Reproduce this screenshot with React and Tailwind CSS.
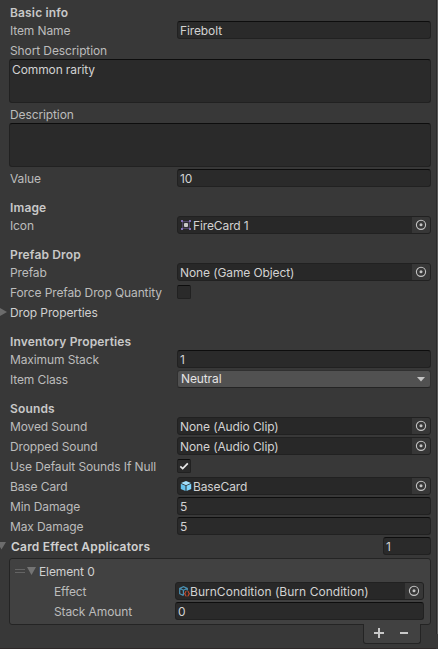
import React from 'react';

const FIELD =
  'h-[18px] rounded-[3px] border border-[#212121] text-[#d2d2d2] flex items-center min-w-0';

function Header({ children, first }) {
  return (
    <div className={`flex h-[18px] items-center pl-[10px] font-semibold tracking-[0.15px] text-[#c8c8c8] ${first ? '' : 'mt-[9px]'}`}>
      <span className="relative top-px">{children}</span>
    </div>
  );
}

function Row({ label, children, labelClass = 'w-[177px] pl-[10px]' }) {
  return (
    <div className="mb-[2px] flex h-[18px] items-center">
      <div className={`shrink-0 whitespace-nowrap text-[#bcbcbc] ${labelClass}`}>
        <span className="relative top-px">{label}</span>
      </div>
      {children}
    </div>
  );
}

function Input({ value, className = 'flex-1' }) {
  return (
    <div className={`${FIELD} border-t-[#0d0d0d] bg-[#2a2a2a] pl-[2px] ${className}`}>
      <span className="relative top-px">{value}</span>
    </div>
  );
}

function Picker() {
  return (
    <div className="flex h-full w-[18px] shrink-0 items-center justify-center rounded-r-[2px] bg-[#373737]">
      <svg width="12" height="12" viewBox="0 0 12 12" fill="none">
        <circle cx="6" cy="5.8" r="4.6" stroke="#c4c4c4" strokeWidth="1.1" />
        <circle cx="6" cy="5.8" r="1.5" fill="#c4c4c4" />
      </svg>
    </div>
  );
}

function ObjectField({ icon, value, textClass = '' }) {
  return (
    <div className={`${FIELD} flex-1 bg-[#282828] pl-[2px]`}>
      {icon}
      <span className={`relative top-px flex-1 whitespace-nowrap ${textClass}`}>{value}</span>
      <Picker />
    </div>
  );
}

function Checkbox({ checked }) {
  return (
    <div className="h-[14px] w-[14px] rounded-[2px] border border-[#212121] border-t-[#0d0d0d] bg-[#2a2a2a]">
      {checked && (
        <svg width="12" height="12" viewBox="0 0 12 12" fill="none">
          <path d="M2.3 6.3 4.7 8.6 9.8 3.3" stroke="#e8e8e8" strokeWidth="1.7" />
        </svg>
      )}
    </div>
  );
}

function SpriteIcon() {
  return (
    <svg className="mr-px shrink-0" width="12" height="16" viewBox="0 0 12 16">
      <path d="M2.5 4.5h7v7h-7z" fill="#302c38" stroke="#514766" />
      <path fill="#8571ba" d="M1 3h2v2H1zM9 3h2v2H9zM1 11h2v2H1zM9 11h2v2H9z" />
      <rect x="4" y="6" width="4" height="4" rx="1" fill="#c8c8c8" />
    </svg>
  );
}

function PrefabIcon() {
  return (
    <svg className="mr-px shrink-0" width="12" height="16" viewBox="0 0 12 16">
      <path d="M6 3 11 5 6 7.2 1 5z" fill="#a3dffb" />
      <path d="M.8 5.8 5.5 7.8V13L.8 11z" fill="#67c3ef" />
      <path d="M11.2 5.8 6.5 7.8V13l4.7-2z" fill="#7ed3fa" />
    </svg>
  );
}

function ScriptableIcon() {
  return (
    <svg className="shrink-0" width="12" height="16" viewBox="0 0 12 16" fill="none">
      <path d="M5.3 12.4 1.7 10.7V5.4L5.5 3.7 9.3 5.4V7.4M1.7 5.4 5.5 7.2 9.3 5.4M5.4 7.2v5.2" stroke="#4a91b3" strokeWidth="1.2" />
      <path d="M8.4 8.3C7.3 8.3 7.6 10 6.6 10.7c1 .6.7 2.4 1.8 2.4M9.6 8.3c1.1 0 .8 1.7 1.8 2.4-1 .6-.7 2.4-1.8 2.4" stroke="#c64c2e" strokeWidth="1.1" />
    </svg>
  );
}

function TextArea({ children }) {
  return (
    <div className="mb-[2px] ml-[9px] h-[44px] rounded-[3px] border border-[#212121] border-t-[#0d0d0d] bg-[#2a2a2a] pl-[2px] pt-px leading-[17px] text-[#d2d2d2]">
      {children}
    </div>
  );
}

function Label({ children }) {
  return (
    <div className="flex h-[18px] items-center pl-[10px] text-[#bcbcbc]">
      <span className="relative top-px">{children}</span>
    </div>
  );
}

export default function App() {
  return (
    <div className="relative h-[649px] w-[438px] overflow-hidden bg-[#383838] font-['Inter',sans-serif] text-[12px] leading-[16px] tracking-[-0.11px]">
      <div className="absolute right-0 top-0 h-[634px] w-[2px] border-l border-[#2b2b2b] bg-[#5a5a5a]" />
      <div className="absolute bottom-0 left-0 h-px w-[436px] bg-[#2e2929]" />
      <div className="flex w-[431px] flex-col pt-[3px]">
        <Header first>Basic info</Header>
        <Row label="Item Name"><Input value="Firebolt" /></Row>
        <Label>Short Description</Label>
        <TextArea>Common rarity</TextArea>
        <Label>Description</Label>
        <TextArea />
        <Row label="Value"><Input value="10" /></Row>

        <Header>Image</Header>
        <Row label="Icon"><ObjectField icon={<SpriteIcon />} value="FireCard 1" /></Row>

        <Header>Prefab Drop</Header>
        <Row label="Prefab"><ObjectField value="None (Game Object)" /></Row>
        <Row label="Force Prefab Drop Quantity"><Checkbox /></Row>
        <div className="mb-[2px] flex h-[18px] items-center text-[#d0d0d0]">
          <svg className="mr-[3px]" width="7" height="8" viewBox="0 0 7 8"><path d="M0 0 7 4 0 8z" fill="#6c6c6c" /></svg>
          <span className="relative top-px">Drop Properties</span>
        </div>

        <Header>Inventory Properties</Header>
        <Row label="Maximum Stack"><Input value="1" /></Row>
        <Row label="Item Class">
          <div className="flex h-[18px] flex-1 items-center justify-between rounded-[3px] border border-[#303030] border-b-[#242424] bg-[#515151] pl-[3px] pr-[5px] text-[#e4e4e4]">
            <span>Neutral</span>
            <svg width="8" height="5" viewBox="0 0 8 5"><path d="M0 0h8L4 4.5z" fill="#c4c4c4" /></svg>
          </div>
        </Row>

        <Header>Sounds</Header>
        <Row label="Moved Sound"><ObjectField value="None (Audio Clip)" /></Row>
        <Row label="Dropped Sound"><ObjectField value="None (Audio Clip)" /></Row>
        <Row label="Use Default Sounds If Null"><Checkbox checked /></Row>
        <Row label="Base Card"><ObjectField icon={<PrefabIcon />} value="BaseCard" /></Row>
        <Row label="Min Damage"><Input value="5" /></Row>
        <Row label="Max Damage"><Input value="5" /></Row>

        <div className="flex h-[18px] items-center">
          <svg width="11" height="8" viewBox="0 0 11 8"><path d="M-3 0H6L1.5 7.5z" fill="#6c6c6c" /></svg>
          <span className="relative top-px flex-1 font-semibold tracking-[0.2px] text-[#d0d0d0]">Card Effect Applicators</span>
          <Input value="1" className="w-[48px]" />
        </div>

        <div className="ml-[9px] mt-[3px] h-[67px] rounded-[3px] border border-[#242424] bg-[#414141] pr-[6px] pt-[3px]">
          <div className="mb-[2px] flex h-[18px] items-center pl-[5px] text-[#d0d0d0]">
            <div className="mr-[2px] h-[4px] w-[10px] border-y border-[#646464]" />
            <svg className="mr-[3px]" width="9" height="8" viewBox="0 0 9 8"><path d="M0 0H9L4.5 8z" fill="#747474" /></svg>
            <span className="relative top-px">Element 0</span>
          </div>
          <Row label="Effect" labelClass="w-[165px] pl-[44px]">
            <ObjectField icon={<ScriptableIcon />} value="BurnCondition (Burn Condition)" textClass="tracking-[0.03px]" />
          </Row>
          <Row label="Stack Amount" labelClass="w-[165px] pl-[44px]"><Input value="0" /></Row>
        </div>
        <div className="relative -mt-px ml-[363px] flex h-[20px] w-[58px] items-center justify-between rounded-b-[3px] border border-t-0 border-[#242424] bg-[#414141] pl-[10px] pr-[11px]">
          <svg width="11" height="11" viewBox="0 0 11 11"><path d="M5 0v10M0 5h10" stroke="#c8c8c8" strokeWidth="2" /></svg>
          <svg width="9" height="11" viewBox="0 0 9 11"><path d="M0 5h8" stroke="#c8c8c8" strokeWidth="2" /></svg>
        </div>
      </div>
    </div>
  );
}
